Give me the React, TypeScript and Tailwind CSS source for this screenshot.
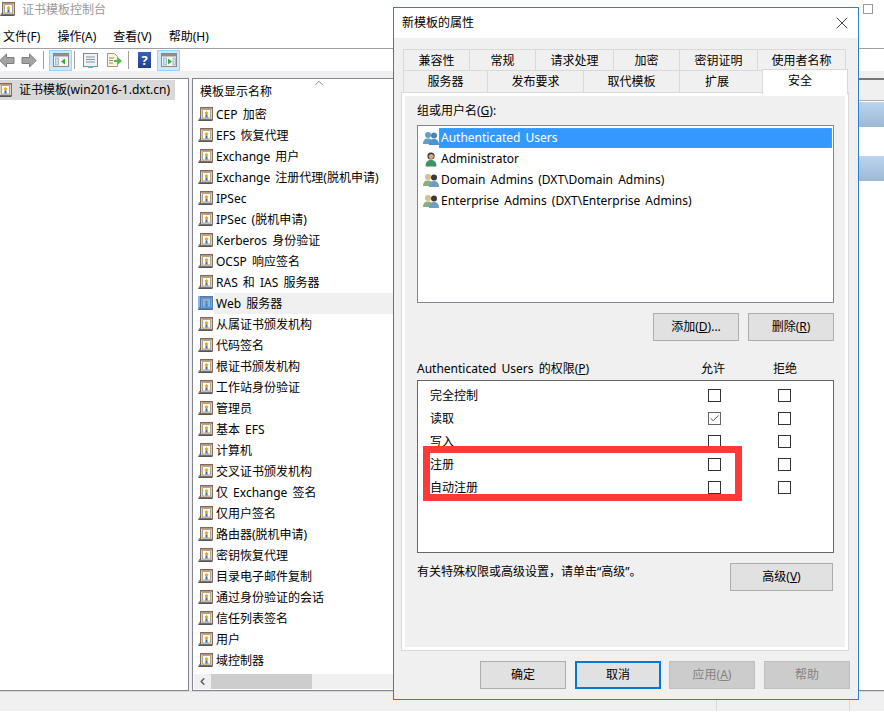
import { X, Check, ChevronLeft, ChevronUp } from "lucide-react"
import { twMerge } from "tailwind-merge"

const templates = [
  "CEP 加密",
  "EFS 恢复代理",
  "Exchange 用户",
  "Exchange 注册代理(脱机申请)",
  "IPSec",
  "IPSec (脱机申请)",
  "Kerberos 身份验证",
  "OCSP 响应签名",
  "RAS 和 IAS 服务器",
  "Web 服务器",
  "从属证书颁发机构",
  "代码签名",
  "根证书颁发机构",
  "工作站身份验证",
  "管理员",
  "基本 EFS",
  "计算机",
  "交叉证书颁发机构",
  "仅 Exchange 签名",
  "仅用户签名",
  "路由器(脱机申请)",
  "密钥恢复代理",
  "目录电子邮件复制",
  "通过身份验证的会话",
  "信任列表签名",
  "用户",
  "域控制器",
]

const topTabs = [
  { label: "兼容性", w: "w-[66px]" },
  { label: "常规", w: "w-[66px]" },
  { label: "请求处理", w: "w-[78px]" },
  { label: "加密", w: "w-[66px]" },
  { label: "密钥证明", w: "w-[78px]" },
  { label: "使用者名称", w: "w-[89px]" },
]

const bottomTabs = [
  { label: "服务器", w: "w-[84px]" },
  { label: "发布要求", w: "w-[96px]" },
  { label: "取代模板", w: "w-[96px]" },
  { label: "扩展", w: "w-[83px] pr-[8px]" },
]

const perms = [
  { label: "完全控制", allow: false },
  { label: "读取", allow: true },
  { label: "写入", allow: false },
  { label: "注册", allow: false },
  { label: "自动注册", allow: false },
]

function CertIcon({ selected = false }: { selected?: boolean }) {
  return (
    <svg width="15" height="15" viewBox="0 0 15 15" className="shrink-0">
      <rect x="2.500" y="0.500" width="12" height="12" fill="#d9cfc2" stroke="#7f7168" />
      <rect x="3" y="0" width="12" height="1.500" fill="#8d6450" />
      <rect x="4.500" y="2.500" width="8" height="8.500" fill="#ffffff" stroke="#b3a48f" />
      <path d="M8.500 4 10.500 6 8.500 8 6.500 6z" fill="#f2a900" />
      <path d="M7.500 7.500h2V11l-1-.8-1 .8z" fill="#2f6fc0" />
      <path d="M2.500 10.500 0.500 13.500h14" fill="none" stroke="#555" />
      {selected && <rect x="0" y="0" width="15" height="14" fill="#3385e0" opacity="0.6" />}
    </svg>
  )
}

function PaneIcon({ side }: { side: "left" | "right" }) {
  return (
    <svg width="16" height="14" viewBox="0 0 16 14">
      <rect x="0.500" y="0.500" width="15" height="13" fill="#f6f6f6" stroke="#8a8a8a" />
      <rect x="1" y="1" width="14" height="2.500" fill="#8f8f8f" />
      <rect x="2.500" y="5" width="3" height="7" fill="#cfe0f0" stroke="#7c9cbc" strokeWidth="0.6" />
      {side === "left" ? (
        <path d="M12 5.500v6L8 8.500z" fill="#3aa83a" />
      ) : (
        <path d="M7 5.500v6l4-3z" fill="#3aa83a" />
      )}
      {side === "right" && <rect x="12" y="5" width="2.500" height="7" fill="#cfe0f0" stroke="#7c9cbc" strokeWidth="0.6" />}
    </svg>
  )
}

function NavArrow({ dir }: { dir: "left" | "right" }) {
  return (
    <svg width="16" height="15" viewBox="0 0 16 15">
      <path
        d={dir === "left" ? "M7.500 1 .8 7.500l6.700 6.500V10.500H15v-6H7.500z" : "M8.500 1l6.700 6.500-6.700 6.500V10.500H1v-6h7.500z"}
        fill="#a3a3a3"
        stroke="#7d7d7d"
      />
    </svg>
  )
}

function UserIcon({ kind }: { kind: "blue" | "single" | "admins" }) {
  if (kind === "single") {
    return (
      <svg width="16" height="16" viewBox="0 0 16 16" className="shrink-0">
        <circle cx="8" cy="5" r="3.600" fill="#3c2f26" />
        <circle cx="8.200" cy="5.600" r="2.500" fill="#d3a88a" />
        <path d="M2.500 15.500c0-5 2.500-6.500 5.500-6.500s5.500 1.500 5.500 6.500z" fill="#3f9268" />
      </svg>
    )
  }
  const back = kind === "blue" ? "#5f9fc9" : "#d9bd8f"
  const backBody = kind === "blue" ? "#5f9fc9" : "#8cb07a"
  const front = kind === "blue" ? "#3f86c0" : "#3c3a3c"
  return (
    <svg width="16" height="14" viewBox="0 0 16 14" className="shrink-0">
      <circle cx="5" cy="4" r="3" fill={back} />
      <path d="M0 13c0-4 2-5.500 5-5.500s5 1.500 5 5.500z" fill={backBody} />
      <circle cx="11" cy="4.500" r="3" fill={front} />
      <path d="M6 14c0-4 2-6 5-6s5 2 5 6z" fill={kind === "blue" ? "#4d93c9" : "#6f9cc4"} />
    </svg>
  )
}

function WinButton({ children, className = "" }: { children: React.ReactNode; className?: string }) {
  return (
    <button
      className={twMerge(
        "flex h-[28px] w-[86px] items-center justify-center border border-[#adadad] bg-[#e1e1e1] text-[12px] text-black",
        className
      )}
    >
      {children}
    </button>
  )
}

function Box({ checked = false }: { checked?: boolean }) {
  return (
    <span className={`flex h-[13px] w-[13px] items-center justify-center border bg-white ${checked ? "border-[#666]" : "border-[#333]"}`}>
      {checked && <Check className="h-[11px] w-[11px] text-[#444]" strokeWidth={2} />}
    </span>
  )
}

export default function App() {
  return (
    <div
      className="relative h-[712px] w-[884px] overflow-hidden bg-white text-[12px] text-black [word-spacing:2px]"
      style={{ fontFamily: '"Noto Sans", "Noto Sans CJK SC", sans-serif' }}
    >
      {/* Console window behind the dialog */}
      <div className="flex h-[25px] items-start bg-white">
        <div className="mt-[2px]">
          <CertIcon />
        </div>
        <span className="ml-[7px] mt-[1px] leading-[18px] text-[#9a9a9a]">证书模板控制台</span>
        <span className="ml-auto mr-[11px] mt-[4px] h-[10px] w-[10px] border border-[#999]" />
      </div>
      <div className="flex h-[24px] items-center gap-[17px] border-b border-[#a0a0a0] pl-[3px]">
        <span>文件(F)</span>
        <span>操作(A)</span>
        <span>查看(V)</span>
        <span>帮助(H)</span>
      </div>
      <div className="flex h-[22px] items-center bg-white">
        <span className="-ml-px">
          <NavArrow dir="left" />
        </span>
        <span className="ml-[6px]">
          <NavArrow dir="right" />
        </span>
        <span className="ml-[6px] h-[18px] w-px bg-[#a0a0a0]" />
        <span className="ml-[5px] flex h-[21px] w-[23px] items-center justify-center border border-[#99d1ff] bg-[#cce8ff]">
          <PaneIcon side="left" />
        </span>
        <span className="ml-[2px] h-[18px] w-px bg-[#a0a0a0]" />
        <svg width="15" height="15" viewBox="0 0 15 15" className="ml-[8px]">
          <rect x="0.500" y="0.500" width="14" height="13" fill="#f2f2f2" stroke="#888" />
          <path d="M3 4h9M3 6.500h9M3 9h9" stroke="#7c93a8" />
          <rect x="5" y="13" width="5" height="2" fill="#55b0e0" />
        </svg>
        <svg width="16" height="15" viewBox="0 0 16 15" className="ml-[8px]">
          <path d="M1.500 0.500h7l3 3v10h-10z" fill="#fdf6dc" stroke="#a09a80" />
          <path d="M3 5h5M3 7.500h4M3 10h4" stroke="#8a8a70" />
          <path d="M8 7h4V4.500L16 8l-4 3.500V9H8z" fill="#4fb84f" />
        </svg>
        <span className="ml-[6px] h-[18px] w-px bg-[#a0a0a0]" />
        <span className="ml-[9px] flex h-[16px] w-[13px] items-center justify-center bg-gradient-to-b from-[#3a5fc0] to-[#24408f] text-[13px] font-bold leading-none text-white">
          ?
        </span>
        <span className="ml-[6px] flex h-[21px] w-[23px] items-center justify-center border border-[#99d1ff] bg-[#cce8ff]">
          <PaneIcon side="right" />
        </span>
      </div>
      <div className="h-[7px] bg-[#f0f0f0]" />
      <div className="flex h-[613px] bg-[#f0f0f0]">
        {/* Tree */}
        <div className="w-[189px] border-y border-r border-[#828790] bg-white pt-[1px]">
          <div className="flex h-[20px] w-[175px] items-center gap-[7px] bg-[#d9d9d9]">
            <span className="-ml-[3px]">
              <CertIcon />
            </span>
            <span>证书模板(win2016-1.dxt.cn)</span>
          </div>
        </div>
        {/* Template list */}
        <div className="relative ml-[3px] flex w-[640px] flex-col border-y border-l border-[#828790] bg-white">
          <ChevronUp className="absolute left-[119px] top-[-3px] h-[14px] w-[14px] text-[#777]" strokeWidth={1.5} />
          <div className="flex h-[25px] shrink-0 items-center pl-[7px]">模板显示名称</div>
          <div className="min-h-0 flex-1">
            {templates.map((name) => {
              const selected = name === "Web 服务器"
              return (
                <div key={name} className="flex h-[21px] items-center gap-px pl-[5px]">
                  <CertIcon selected={selected} />
                  <span className={`flex h-full flex-1 items-center pl-[2px] ${selected ? "bg-[#f0f0f0]" : ""}`}>{name}</span>
                </div>
              )
            })}
          </div>
          <div className="mb-px ml-px flex h-[15px] shrink-0 items-center bg-[#f0f0f0]">
            <span className="flex h-[15px] w-[17px] items-center justify-center">
              <ChevronLeft className="h-[11px] w-[11px] text-[#555]" strokeWidth={3} />
            </span>
            <span className="h-[15px] w-[101px] bg-[#cdcdcd]" />
          </div>
        </div>
        {/* Actions pane */}
        <div className="flex-1 border-b border-l border-[#828790] bg-white">
          <div className="h-[23px] border-t-2 border-b border-t-[#777] border-b-[#aaa] bg-[#f0f0f0]" />
          <div className="mt-px h-[25px] bg-gradient-to-b from-[#bcd4ee] to-[#9db8d6]" />
          <div className="mt-[29px] h-[25px] bg-gradient-to-b from-[#bcd4ee] to-[#9db8d6]" />
        </div>
      </div>
      <div className="flex h-[20px] border-t border-[#d9d9d9] bg-[#f0f0f0]">
        <span className="ml-[716px] h-full w-px bg-[#d9d9d9]" />
        <span className="ml-[132px] h-full w-px bg-[#d9d9d9]" />
      </div>

      {/* Properties dialog */}
      <div className="absolute left-[393px] top-[7px] flex h-[693px] w-[466px] flex-col border border-[#2b7fd0] bg-[#f0f0f0]">
        <div className="flex h-[30px] shrink-0 items-center justify-between bg-white pl-[8px] pr-[6px]">
          <span>新模板的属性</span>
          <X className="h-[20px] w-[20px] text-[#222]" strokeWidth={1} />
        </div>

        <div className="ml-[8px] mt-[11px] w-[446px]">
          {/* Tabs */}
          <div className="ml-[1px] flex h-[22px]">
            {topTabs.map((t) => (
              <div
                key={t.label}
                className={`flex items-center justify-center border-y border-l border-[#d9d9d9] bg-[#f0f0f0] pt-px last:border-r ${t.w}`}
              >
                {t.label}
              </div>
            ))}
          </div>
          <div className="relative ml-[1px] flex h-[22px]">
            {bottomTabs.map((t) => (
              <div key={t.label} className={`flex items-center justify-center border-b border-l border-[#d9d9d9] pt-px ${t.w}`}>
                {t.label}
              </div>
            ))}
            <div className="absolute left-[359px] top-[-2px] flex h-[25px] w-[86px] items-center justify-center border-x border-t border-[#d9d9d9] bg-white pb-[2px] pr-[10px]">
              安全
            </div>
          </div>

          {/* Security tab page */}
          <div className="h-[557px] border-[3px] border-white pl-[12px] pr-[11px] pt-[5px] outline outline-[#d9d9d9]">
            <div className="leading-[20px]">
              组或用户名(<span className="underline">G</span>):
            </div>
            <div className="mt-[4px] h-[178px] border border-[#828790] bg-white p-px">
              <div className="flex h-[21px] items-center pl-[4px]">
                <UserIcon kind="blue" />
                <span className="flex h-[20px] flex-1 items-center border border-dotted border-[#c98a3a] bg-[#3399ff] pl-[1px] text-white">
                  Authenticated Users
                </span>
              </div>
              <div className="flex h-[21px] items-center pl-[4px]">
                <UserIcon kind="single" />
                <span className="pl-[2px]">Administrator</span>
              </div>
              <div className="flex h-[21px] items-center pl-[4px]">
                <UserIcon kind="admins" />
                <span className="pl-[2px]">Domain Admins (DXT\Domain Admins)</span>
              </div>
              <div className="flex h-[21px] items-center pl-[4px]">
                <UserIcon kind="admins" />
                <span className="pl-[2px]">Enterprise Admins (DXT\Enterprise Admins)</span>
              </div>
            </div>

            <div className="mt-[10px] flex justify-end gap-[9px]">
              <WinButton>
                添加(<span className="underline">D</span>)...
              </WinButton>
              <WinButton>
                删除(<span className="underline">R</span>)
              </WinButton>
            </div>

            <div className="mt-[18px] flex h-[20px] items-center">
              <span className="flex-1">
                Authenticated Users 的权限(<span className="underline">P</span>)
              </span>
              <span className="w-[72px] text-center">允许</span>
              <span className="mr-[13px] w-[72px] text-center">拒绝</span>
            </div>
            <div className="relative mt-[1px] h-[173px] border border-[#666] bg-white pl-[12px] pt-[3px]">
              {perms.map((p) => (
                <div key={p.label} className="flex h-[23px] items-center">
                  <span className="flex-1">{p.label}</span>
                  <span className="flex w-[70px] justify-center">
                    <Box checked={p.allow} />
                  </span>
                  <span className="mr-[14px] flex w-[70px] justify-center">
                    <Box />
                  </span>
                </div>
              ))}
              {/* Red annotation drawn on top of the screenshot */}
              <div className="absolute left-[5px] top-[65px] h-[55px] w-[319px] border-[7px] border-[#ff3838]" />
            </div>

            <div className="mt-[10px] flex items-start justify-between pr-px">
              <span className="mt-[-1px] leading-[20px]">有关特殊权限或高级设置，请单击“高级”。</span>
              <WinButton className="w-[103px]">
                高级(<span className="underline">V</span>)
              </WinButton>
            </div>
          </div>
        </div>

        {/* Dialog buttons */}
        <div className="mt-[11px] flex justify-end gap-[8px] pr-[8px]">
          <WinButton>确定</WinButton>
          <WinButton className="ml-px border-2 border-[#0078d7]">取消</WinButton>
          <WinButton className="border-[#bfbfbf] bg-[#cccccc] text-[#838383]">
            应用(<span className="underline">A</span>)
          </WinButton>
          <WinButton className="ml-px border-[#bfbfbf] bg-[#cccccc] text-[#838383]">帮助</WinButton>
        </div>
      </div>
    </div>
  )
}
